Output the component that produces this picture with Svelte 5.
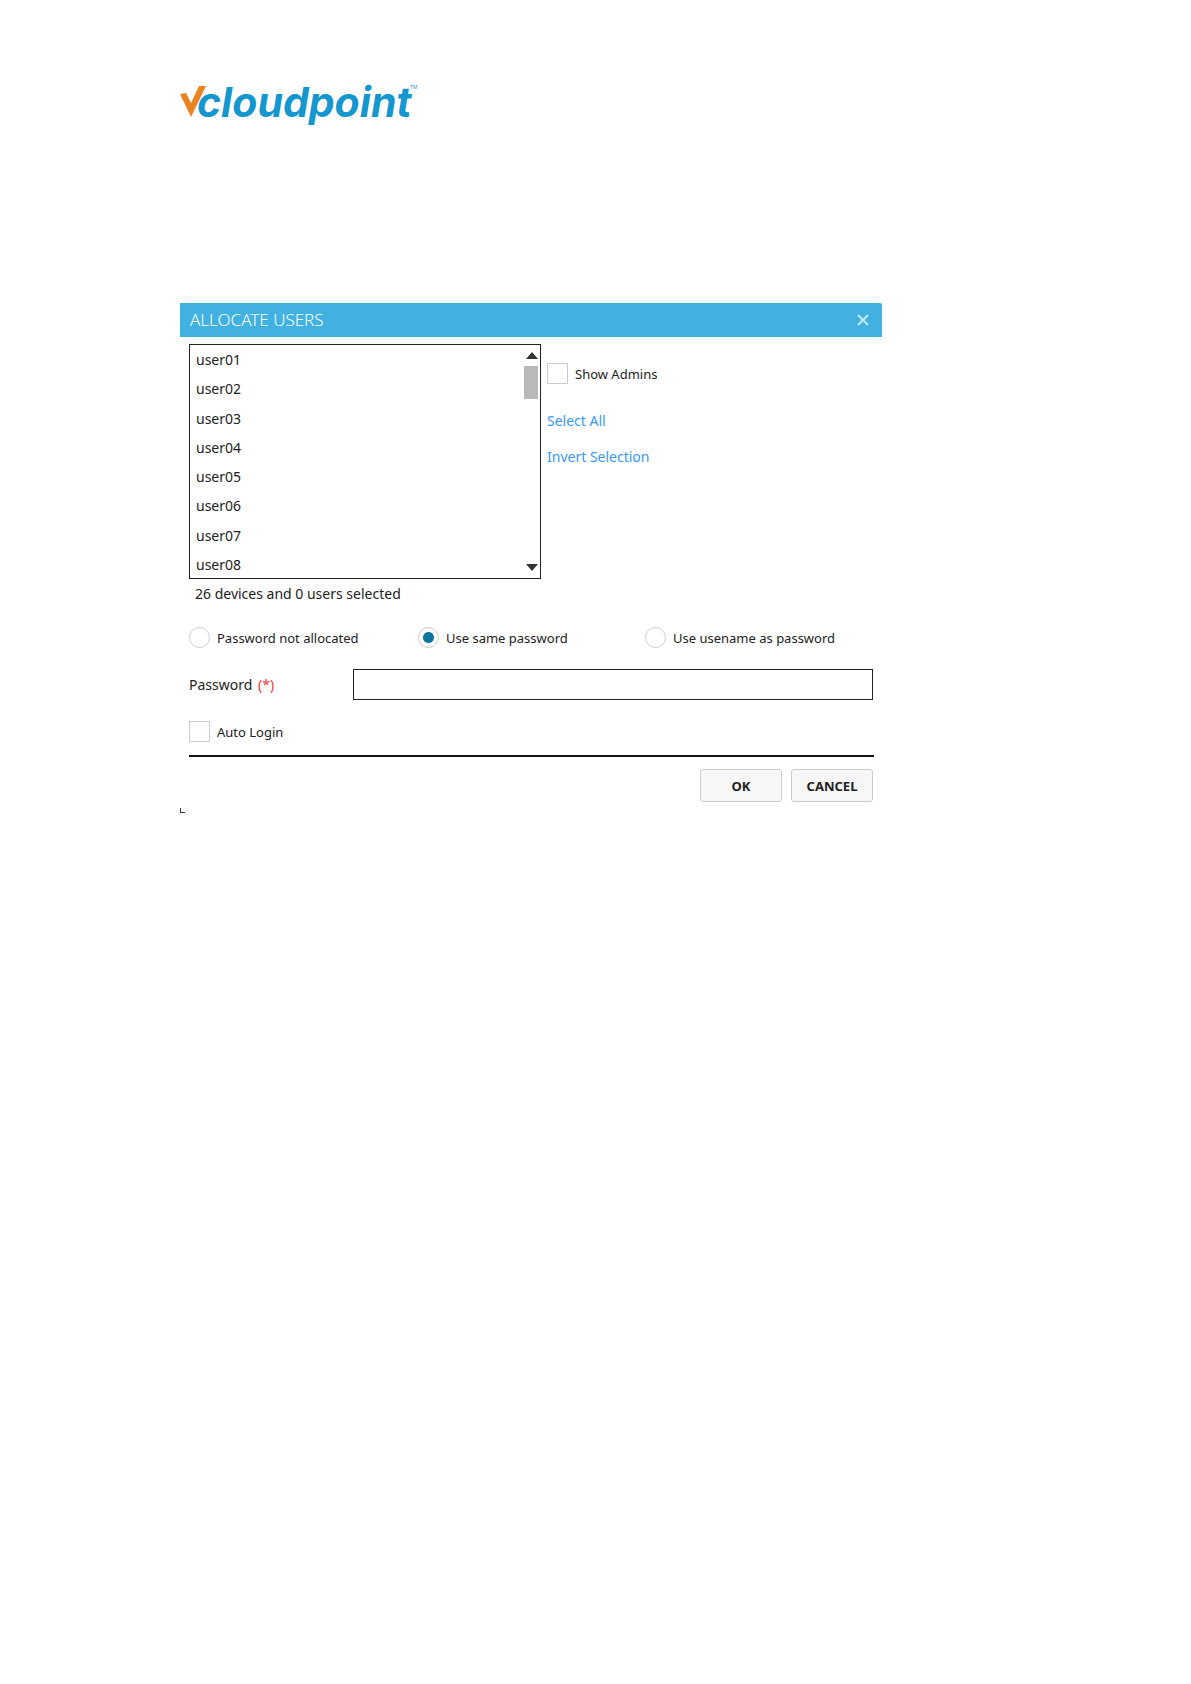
<script>
    const users = ['user01', 'user02', 'user03', 'user04', 'user05', 'user06', 'user07', 'user08'];
    const modes = [
        { id: 'none', label: 'Password not allocated' },
        { id: 'same', label: 'Use same password' },
        { id: 'username', label: 'Use usename as password' }
    ];

    let mode = 'same';
    let password = '';
    let showAdmins = false;
    let autoLogin = false;
    let selected = [];

    function toggle(user) {
        selected = selected.includes(user) ? selected.filter((u) => u !== user) : [...selected, user];
    }

    function selectAll() {
        selected = [...users];
    }

    function invertSelection() {
        selected = users.filter((u) => !selected.includes(u));
    }
</script>

<div class="page">
    <header class="brand">
        <svg class="logo" viewBox="0 -10 240 60" role="img" aria-label="vcloudpoint">
            <path d="M0 12 L6 11 L11 21 L19 4 L26 4 L11 35 Z" fill="#ec8322" />
            <text class="logo-name" x="17" y="35">cloudpoint</text>
            <text class="logo-tm" x="230" y="7">TM</text>
        </svg>
    </header>

    <form class="dialog" on:submit|preventDefault>
        <div class="titlebar">
            <h1>ALLOCATE USERS</h1>
            <button type="button" class="close" aria-label="Close">
                <svg viewBox="0 0 12 12"><path d="M1 1 L11 11 M11 1 L1 11" /></svg>
            </button>
        </div>

        <div class="content">
            <div class="pick">
                <div class="listbox">
                    <ul>
                        {#each users as user}
                            <li>
                                <button type="button" class="user" class:active={selected.includes(user)} on:click={() => toggle(user)}>{user}</button>
                            </li>
                        {/each}
                    </ul>
                    <div class="scrollbar">
                        <button type="button" aria-label="Scroll up">
                            <svg viewBox="0 0 12 7"><path d="M0 7 L6 0 L12 7 Z" /></svg>
                        </button>
                        <div class="thumb"></div>
                        <button type="button" class="down" aria-label="Scroll down">
                            <svg viewBox="0 0 12 7"><path d="M0 0 L12 0 L6 7 Z" /></svg>
                        </button>
                    </div>
                </div>
                <div class="side">
                    <label class="option">
                        <input type="checkbox" bind:checked={showAdmins} />
                        Show Admins
                    </label>
                    <a href="#all" on:click|preventDefault={selectAll}>Select All</a>
                    <a href="#invert" on:click|preventDefault={invertSelection}>Invert Selection</a>
                </div>
            </div>

            <p class="status">26 devices and {selected.length} users selected</p>

            <div class="modes">
                {#each modes as m}
                    <label class="option">
                        <input type="radio" name="mode" value={m.id} bind:group={mode} />
                        {m.label}
                    </label>
                {/each}
            </div>

            <div class="field">
                <label for="password">Password <span class="required">(*)</span></label>
                <input id="password" type="password" bind:value={password} />
            </div>

            <label class="option">
                <input type="checkbox" bind:checked={autoLogin} />
                Auto Login
            </label>

            <div class="actions">
                <button type="submit">OK</button>
                <button type="button">CANCEL</button>
            </div>
        </div>
        <div class="corner"></div>
    </form>
</div>

<style>
    :global(body) {
        margin: 0;
        background: #fff;
    }

    .page {
        padding: 72px 180px 80px;
        font-family: 'Noto Sans', 'Open Sans', sans-serif;
        font-size: 14px;
        line-height: 20px;
        color: #222;
    }

    .brand {
        margin-bottom: 171px;
    }

    .logo {
        display: block;
        width: 240px;
        height: 60px;
    }

    .logo-name {
        font: italic bold 41px Inter, sans-serif;
        fill: #1496cf;
    }

    .logo-tm {
        font: 5px 'Liberation Sans', sans-serif;
        fill: #1496cf;
    }

    .dialog {
        max-width: 702px;
    }

    .titlebar {
        display: flex;
        align-items: center;
        justify-content: space-between;
        height: 34px;
        padding: 0 13px 0 10px;
        background: #41b1e1;
        border-top-right-radius: 2px;
    }

    h1 {
        margin: 0;
        font-size: 17px;
        font-weight: 300;
        color: #fff;
    }

    button {
        font: inherit;
        color: inherit;
        cursor: pointer;
    }

    .close {
        display: flex;
        padding: 0;
        border: 0;
        background: none;
    }

    .close svg {
        width: 12px;
        height: 12px;
        fill: none;
        stroke: #c6e8f7;
        stroke-width: 2;
    }

    .content {
        padding: 7px 8px 0 9px;
    }

    .pick {
        display: flex;
        gap: 6px;
    }

    .listbox {
        box-sizing: border-box;
        display: flex;
        flex: 0 1 352px;
        height: 235px;
        border: 1px solid #222;
        overflow: hidden;
    }

    ul {
        display: flex;
        flex: 1;
        flex-direction: column;
        justify-content: space-between;
        height: 233px;
        margin: 0;
        padding: 1px 0 0;
        list-style: none;
    }

    .user {
        display: block;
        width: 100%;
        padding: 0 6px;
        border: 0;
        background: none;
        line-height: 28px;
        text-align: left;
    }

    .user.active {
        background: #cce8f6;
    }

    .scrollbar {
        display: flex;
        flex-direction: column;
        width: 16px;
    }

    .scrollbar button {
        display: flex;
        padding: 7px 2px;
        border: 0;
        background: none;
    }

    .scrollbar .down {
        margin-top: auto;
    }

    .scrollbar svg {
        width: 12px;
        height: 7px;
        fill: #333;
    }

    .thumb {
        width: 14px;
        height: 33px;
        background: #b9b9b9;
    }

    .side {
        display: flex;
        flex-direction: column;
        align-items: flex-start;
        gap: 16px;
        padding-top: 19px;
    }

    .side .option {
        margin-bottom: 11px;
    }

    a {
        color: #3399ff;
        text-decoration: none;
    }

    .option {
        display: flex;
        align-items: center;
        gap: 7px;
        font-size: 13px;
    }

    .option input {
        appearance: none;
        box-sizing: border-box;
        flex: none;
        width: 21px;
        height: 21px;
        margin: 0;
        border: 1px solid #ccc;
        background: #fff;
    }

    .option input[type='radio'] {
        border-radius: 50%;
    }

    .option input[type='radio']:checked {
        background: radial-gradient(circle, #0f739f 5px, #fff 6px);
    }

    .option input[type='checkbox']:checked {
        background: #0f739f;
        box-shadow: inset 0 0 0 4px #fff;
    }

    .status {
        margin: 5px 0 23px 6px;
    }

    .modes {
        display: grid;
        grid-template-columns: 229px 227px 1fr;
        margin-bottom: 21px;
    }

    .field {
        display: grid;
        grid-template-columns: 164px 1fr;
        align-items: center;
        margin: 0 1px 21px 0;
    }

    .field input {
        box-sizing: border-box;
        width: 100%;
        height: 31px;
        padding: 0 6px;
        border: 1px solid #222;
        font: inherit;
    }

    .required {
        margin-left: 2px;
        color: #f33;
    }

    .actions {
        display: flex;
        justify-content: flex-end;
        gap: 9px;
        margin-top: 13px;
        padding: 12px 1px 0 0;
        border-top: 2px solid #111;
    }

    .actions button {
        width: 82px;
        height: 33px;
        padding: 0;
        border: 1px solid #ccc;
        border-radius: 3px;
        background: #f7f7f7;
        font-size: 13px;
        font-weight: bold;
    }

    .corner {
        width: 4px;
        height: 4px;
        margin-top: 6px;
        border: solid #333;
        border-width: 0 0 1px 1px;
    }
</style>
